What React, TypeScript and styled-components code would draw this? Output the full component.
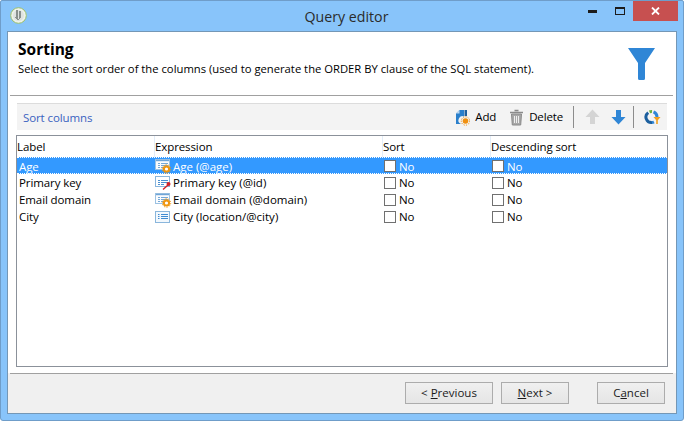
import React from "react";
import styled, { createGlobalStyle } from "styled-components";

const GlobalStyle = createGlobalStyle`
  html, body {
    margin: 0;
    padding: 0;
    background: #fff;
  }
  body {
    font-family: "Open Sans", "Noto Sans", sans-serif;
    font-size: 12px;
    color: #000;
  }
`;

const GearBadge = ({ x = 11.500, y = 11 }: { x?: number; y?: number }) => (
  <g>
    <circle cx={x} cy={y} r="2.600" fill="#fff" stroke="#f0960f" strokeWidth="2" />
    <circle cx={x} cy={y} r="4.200" fill="none" stroke="#f0960f" strokeWidth="1" strokeDasharray="1.300 1.300" />
  </g>
);

const ListLines = ({ color }: { color: string }) => (
  <path d="M3 5.500h2M6 5.500h7M3 7.500h2M6 7.500h7M3 9.500h2M6 9.500h3" stroke={color} strokeWidth="1" />
);

const GearListIcon = () => (
  <svg width="17" height="16" viewBox="0 0 17 16">
    <rect x=".5" y="1.500" width="14" height="10" fill="#fafcfe" stroke="#9dc2e2" />
    <path d="M1 2.500h13" stroke="#6fa5d6" strokeWidth="1.400" />
    <ListLines color="#74a8d8" />
    <GearBadge />
  </svg>
);

const KeyIcon = () => (
  <svg width="17" height="16" viewBox="0 0 17 16">
    <rect x=".5" y="1.500" width="14" height="10" fill="#fff" stroke="#8ab6dc" />
    <ListLines color="#4a8fd0" />
    <path d="M8 14.500l5-4.500" stroke="#d42027" strokeWidth="1.400" />
    <circle cx="13.500" cy="9" r="2" fill="#d42027" />
  </svg>
);

const PlainListIcon = () => (
  <svg width="17" height="16" viewBox="0 0 17 16">
    <rect x=".5" y="2.500" width="14" height="11" fill="#f2f8fd" stroke="#8ab6dc" />
    <path d="M3 5.500h1.500M6 5.500h7M3 7.500h1.500M6 7.500h7M3 9.500h1.500M6 9.500h7" stroke="#3f8bd2" />
  </svg>
);

const AddIcon = () => (
  <svg width="15" height="17" viewBox="0 0 15 17">
    <path d="M1 4.500L4.500 1H9v6.500A4 4 0 0 0 6 15H1z" fill="#2a7fcb" />
    <path d="M1 4.500h3.500V1z" fill="#bcd8f0" />
    <path d="M9.500 1H12v6h-2.500z" fill="#1f5f9c" />
    <circle cx="10.500" cy="12" r="2.800" fill="#f0900f" />
    <circle cx="10.500" cy="12" r="4.200" fill="none" stroke="#f0900f" strokeWidth="1" strokeDasharray="1.200 1.200" />
  </svg>
);

const TrashIcon = () => (
  <svg width="15" height="17" viewBox="0 0 15 17">
    <path d="M5.500 1.500h4M1 3.500h13" stroke="#8a8a8a" strokeWidth="1.400" />
    <path d="M2.500 5h10l-.8 11H3.300z" fill="#a8a8a8" stroke="#8a8a8a" />
    <path d="M5.500 7v7M7.500 7v7M9.500 7v7" stroke="#efefef" />
  </svg>
);

const ArrowIcon = ({ color, down }: { color: string; down?: boolean }) => (
  <svg width="15" height="16" viewBox="0 0 15 16">
    <path d={down ? "M5 1h5v7h4.500l-7 7.500-7-7.500H5z" : "M5 15h5V8h4.500l-7-7.500-7 7.500H5z"} fill={color} />
  </svg>
);

const ChartIcon = () => (
  <svg width="17" height="16" viewBox="0 0 17 16">
    <g fill="none" strokeWidth="3">
      <path d="M4.200 3.600A5.500 5.500 0 0 0 8 13.500" stroke="#1c5f9e" />
      <path d="M5.500 2.900A5.500 5.500 0 0 1 8 2.500" stroke="#6db33f" />
      <path d="M9.500 2.900A5.500 5.500 0 0 1 13 8" stroke="#2f86d6" />
      <path d="M8 13.500A5.500 5.500 0 0 0 10 13" stroke="#2f86d6" />
    </g>
    <path d="M9.500 8h7l-2.700 3.200V15h-1.600v-3.800z" fill="#f0a020" />
  </svg>
);

const AppIcon = () => (
  <svg width="17" height="17" viewBox="0 0 17 17">
    <circle cx="8.500" cy="8.500" r="7.800" fill="#eef2ea" stroke="#9cc06a" />
    <circle cx="8.500" cy="8.500" r="5.500" fill="#dfe3e0" />
    <path d="M7 3v9M10 4v7" stroke="#6d7570" strokeWidth="1.500" />
    <path d="M5 10l3 3 3-3" fill="none" stroke="#8b918c" />
  </svg>
);

const FunnelIcon = () => (
  <svg width="27" height="32" viewBox="0 0 27 32">
    <path d="M0 0h27L17 15v15.500a1.500 1.500 0 0 1-1.500 1.500h-4A1.500 1.500 0 0 1 10 30.500V15z" fill="#2f86d6" />
  </svg>
);

const MinIcon = () => (
  <svg width="9" height="3" viewBox="0 0 9 3">
    <rect width="9" height="3" fill="#1c1c1c" />
  </svg>
);

const MaxIcon = () => (
  <svg width="10" height="8" viewBox="0 0 10 8">
    <rect x=".5" y=".5" width="9" height="7" fill="none" stroke="#1c1c1c" />
    <rect width="10" height="2" fill="#1c1c1c" />
  </svg>
);

const CloseIcon = () => (
  <svg width="9" height="8" viewBox="0 0 9 8">
    <path d="M1 .5l7 7M8 .5l-7 7" stroke="#fff" strokeWidth="1.800" />
  </svg>
);

const Window = styled.div`
  box-sizing: border-box;
  width: 684px;
  height: 421px;
  display: flex;
  flex-direction: column;
  padding: 0 6px 6px;
  background: #88c4fa;
  border: 1px solid #6f9dc9;
  border-radius: 2px 2px 3px 3px;
`;

const TitleBar = styled.div`
  position: relative;
  height: 30px;
  flex: none;
  display: flex;
  align-items: center;
  justify-content: center;
`;

const TitleIcon = styled.div`
  position: absolute;
  left: 3px;
  top: 6px;
  line-height: 0;
`;

const TitleText = styled.div`
  font-size: 14.2px;
  color: #2b2b2b;
  margin-left: 9px;
  margin-top: 1px;
`;

const WindowButtons = styled.div`
  position: absolute;
  right: -1px;
  top: 0;
  display: flex;
  align-items: stretch;
  height: 20px;
`;

const WindowButton = styled.div<{ $close?: boolean }>`
  width: ${(p) => (p.$close ? "45px" : "27px")};
  display: flex;
  align-items: center;
  justify-content: center;
  background: ${(p) => (p.$close ? "#c75050" : "transparent")};
`;

const Client = styled.div`
  flex: 1;
  min-height: 0;
  display: flex;
  flex-direction: column;
  background: #f0f0f0;
  border: 1px solid #7497b6;
`;

const Body = styled.div`
  flex: 1;
  min-height: 0;
  display: flex;
  flex-direction: column;
  background: #fff;
`;

const Header = styled.div`
  height: 56px;
  flex: none;
  margin: 0 3px 0 2px;
  padding: 7px 18px 0 8px;
  display: flex;
  justify-content: space-between;
  border-bottom: 1px solid #a0a0a0;
`;

const HeaderText = styled.div`
  display: flex;
  flex-direction: column;
`;

const Heading = styled.div`
  font-size: 15.5px;
  font-weight: 700;
  line-height: 20px;
`;

const SubHeading = styled.div`
  font-size: 11.25px;
  line-height: 15px;
  margin-top: 2px;
  white-space: nowrap;
`;

const HeaderIcon = styled.div`
  margin-top: 9px;
  line-height: 0;
`;

const Toolbar = styled.div`
  height: 26px;
  flex: none;
  margin: 7px 9px 0;
  padding-right: 2px;
  display: flex;
  align-items: center;
  background: #f3f3f3;
  border-top: 1px solid #dcdcdc;
  font-size: 11.5px;
`;

const ToolbarTitle = styled.div`
  flex: 1;
  padding-left: 6px;
  color: #3a62c0;
  letter-spacing: -0.1px;
`;

const ToolbarGroup = styled.div<{ $gap?: number; $end?: number }>`
  display: flex;
  align-items: center;
  gap: ${(p) => p.$gap ?? 0}px;
  margin-right: ${(p) => p.$end ?? 0}px;
`;

const ToolbarItem = styled.div`
  display: flex;
  align-items: center;
  gap: 5px;
  letter-spacing: -0.15px;
  line-height: 0;
  & > span {
    line-height: 16px;
  }
`;

const ToolbarIconButton = styled.div`
  width: 26px;
  display: flex;
  justify-content: center;
  line-height: 0;
`;

const ToolbarSeparator = styled.div`
  width: 1px;
  height: 22px;
  background: #8c8c8c;
  margin-right: 5px;
`;

const ListBox = styled.div`
  flex: 1;
  min-height: 0;
  margin: 5px 8px 6px 8px;
  border: 1px solid #8b919a;
  background: #fff;
  font-size: 11.5px;
  letter-spacing: -0.1px;
`;

const Row = styled.div<{ $selected?: boolean; $head?: boolean }>`
  display: grid;
  grid-template-columns: 137px 228px 108px 1fr;
  align-items: center;
  box-sizing: border-box;
  height: ${(p) => (p.$head ? "21px" : "17px")};
  color: ${(p) => (p.$selected ? "#fff" : "#000")};
  background: ${(p) => (p.$selected ? "#3399ff" : "transparent")};
  border-top: ${(p) => (p.$selected ? "1px dotted #fff" : "none")};
  border-bottom: ${(p) => (p.$selected ? "1px dotted #fff" : "none")};
`;

const HeadCell = styled.div`
  height: 100%;
  display: flex;
  align-items: center;
  border-left: 1px solid #e3edf8;
  &:first-child {
    border-left: none;
  }
`;

const LabelCell = styled.div`
  padding-left: 2px;
  white-space: nowrap;
`;

const ExpressionCell = styled.div`
  display: flex;
  align-items: center;
  gap: 1px;
  margin-left: 1px;
  white-space: nowrap;
  line-height: 0;
  letter-spacing: 0;
  & > span {
    line-height: 15px;
  }
`;

const CheckCell = styled.div`
  display: flex;
  align-items: center;
  gap: 3px;
  padding-left: 2px;
`;

const CheckBox = styled.span`
  box-sizing: border-box;
  width: 12px;
  height: 12px;
  background: #fff;
  border: 1px solid #707070;
`;

const Footer = styled.div`
  box-sizing: border-box;
  height: 39px;
  flex: none;
  display: flex;
  align-items: flex-start;
  padding: 8px 11px 0 0;
  justify-content: flex-end;
  background: #f0f0f0;
`;

const FooterRule = styled.div`
  height: 1px;
  flex: none;
  margin: 0 3px 0 2px;
  background: #a0a0a0;
`;

const FooterButton = styled.div<{ $wide?: boolean; $gap?: number }>`
  box-sizing: border-box;
  width: ${(p) => (p.$wide ? "88px" : "68px")};
  height: 22px;
  margin-left: ${(p) => p.$gap ?? 0}px;
  padding-bottom: 2px;
  display: flex;
  align-items: center;
  justify-content: center;
  border: 1px solid #acacac;
  background: linear-gradient(#f0f0f0, #e5e5e5);
  font-size: 11.5px;
  color: #1a1a1a;
`;

const rows = [
  { label: "Age", expr: "Age (@age)", icon: <GearListIcon />, selected: true },
  { label: "Primary key", expr: "Primary key (@id)", icon: <KeyIcon /> },
  { label: "Email domain", expr: "Email domain (@domain)", icon: <GearListIcon /> },
  { label: "City", expr: "City (location/@city)", icon: <PlainListIcon /> },
];

export default function App() {
  return (
    <>
      <GlobalStyle />
      <Window>
        <TitleBar>
          <TitleIcon>
            <AppIcon />
          </TitleIcon>
          <TitleText>Query editor</TitleText>
          <WindowButtons>
            <WindowButton>
              <MinIcon />
            </WindowButton>
            <WindowButton>
              <MaxIcon />
            </WindowButton>
            <WindowButton $close>
              <CloseIcon />
            </WindowButton>
          </WindowButtons>
        </TitleBar>
        <Client>
          <Body>
            <Header>
              <HeaderText>
                <Heading>Sorting</Heading>
                <SubHeading>
                  Select the sort order of the columns (used to generate the ORDER BY clause of the SQL statement).
                </SubHeading>
              </HeaderText>
              <HeaderIcon>
                <FunnelIcon />
              </HeaderIcon>
            </Header>
            <Toolbar>
              <ToolbarTitle>Sort columns</ToolbarTitle>
              <ToolbarGroup $gap={13} $end={10}>
                <ToolbarItem>
                  <AddIcon />
                  <span>Add</span>
                </ToolbarItem>
                <ToolbarItem>
                  <TrashIcon />
                  <span>Delete</span>
                </ToolbarItem>
              </ToolbarGroup>
              <ToolbarSeparator />
              <ToolbarGroup $end={2}>
                <ToolbarIconButton>
                  <ArrowIcon color="#d4d4d4" />
                </ToolbarIconButton>
                <ToolbarIconButton>
                  <ArrowIcon color="#2f86d6" down />
                </ToolbarIconButton>
              </ToolbarGroup>
              <ToolbarSeparator />
              <ToolbarIconButton>
                <ChartIcon />
              </ToolbarIconButton>
            </Toolbar>
            <ListBox>
              <Row $head>
                <HeadCell>Label</HeadCell>
                <HeadCell>Expression</HeadCell>
                <HeadCell>Sort</HeadCell>
                <HeadCell>Descending sort</HeadCell>
              </Row>
              {rows.map((row) => (
                <Row key={row.label} $selected={row.selected}>
                  <LabelCell>{row.label}</LabelCell>
                  <ExpressionCell>
                    {row.icon}
                    <span>{row.expr}</span>
                  </ExpressionCell>
                  <CheckCell>
                    <CheckBox />
                    No
                  </CheckCell>
                  <CheckCell>
                    <CheckBox />
                    No
                  </CheckCell>
                </Row>
              ))}
            </ListBox>
          </Body>
          <FooterRule />
          <Footer>
            <FooterButton $wide>
              <span>
                &lt; <u>P</u>revious
              </span>
            </FooterButton>
            <FooterButton $gap={8}>
              <span>
                <u>N</u>ext &gt;
              </span>
            </FooterButton>
            <FooterButton $gap={28}>
              <span>
                C<u>a</u>ncel
              </span>
            </FooterButton>
          </Footer>
        </Client>
      </Window>
    </>
  );
}
